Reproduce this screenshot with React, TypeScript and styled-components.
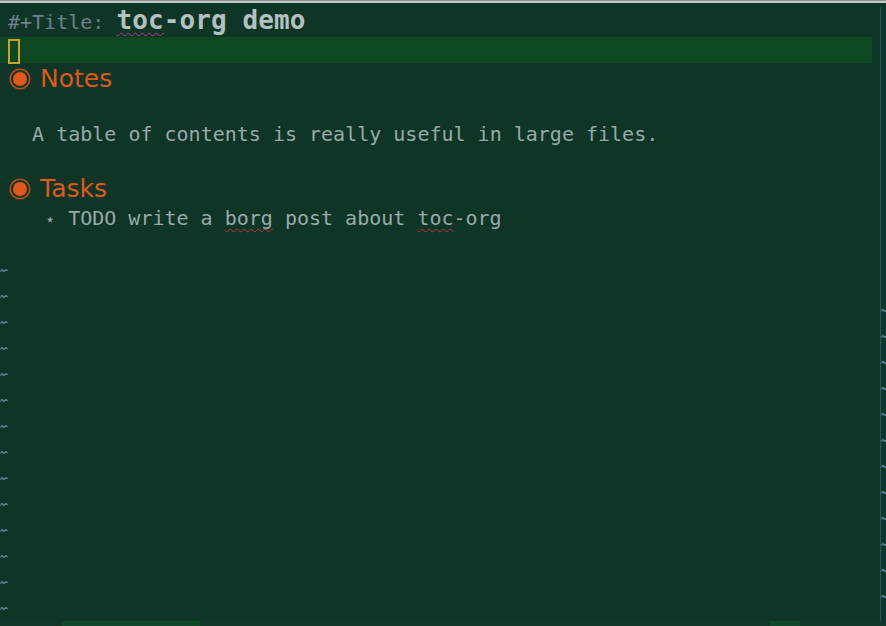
import React from "react";
import styled, { createGlobalStyle } from "styled-components";

const GlobalStyle = createGlobalStyle`
  html, body {
    margin: 0;
    padding: 0;
    background: #0f3526;
    overflow: hidden;
  }
  #root {
    width: 886px;
    height: 626px;
  }
`;

const MONO = `"DejaVu Sans Mono", "Liberation Mono", monospace`;
const SANS = `"DejaVu Sans", "Noto Sans", sans-serif`;

const Screen = styled.div`
  width: 886px;
  height: 626px;
  display: flex;
  flex-direction: column;
  background: #0f3526;
  overflow: hidden;
`;

const TopRule = styled.div`
  height: 3px;
  flex: none;
  background: #c4c6c4;
  border-top: 1px solid #8e9290;
  box-sizing: border-box;
`;

const Body = styled.div`
  flex: 1;
  display: flex;
  min-height: 0;
`;

const Buffer = styled.div`
  width: 872px;
  flex: none;
  display: flex;
  flex-direction: column;
`;

const Line = styled.div<{ $h: number; $hl?: boolean }>`
  height: ${(p) => p.$h}px;
  flex: none;
  display: flex;
  align-items: center;
  background: ${(p) => (p.$hl ? "#0d4820" : "transparent")};
`;

const Fringe = styled.div`
  width: 8px;
  flex: none;
  height: 100%;
  display: flex;
  align-items: center;
  overflow: hidden;
`;

const Content = styled.div<{ $lh: number; $shift?: number }>`
  flex: 1;
  font-family: ${MONO};
  font-size: 20px;
  line-height: ${(p) => p.$lh}px;
  color: #97aaa9;
  white-space: pre;
  padding-top: ${(p) => p.$shift || 0}px;
`;

const Meta = styled.span`
  color: #6c8188;
`;

const TitleText = styled.span`
  font-size: 26px;
  font-weight: bold;
  letter-spacing: 0.1px;
  color: #b4c1c0;
`;

const Spell = styled.span<{ $color?: string }>`
  text-decoration: underline wavy ${(p) => p.$color || "#c8304a"};
  text-decoration-thickness: 1px;
  text-underline-offset: 3px;
  text-decoration-skip-ink: none;
`;

const Cursor = styled.span`
  display: inline-block;
  width: 12px;
  height: 25px;
  box-sizing: border-box;
  border: 2px solid #c9a42a;
  vertical-align: middle;
`;

const Heading = styled.div`
  flex: 1;
  display: flex;
  align-items: center;
`;

const BulletBox = styled.span`
  width: 22px;
  height: 22px;
  flex: none;
  display: flex;
  margin-left: 1px;
`;

const HeadingText = styled.span`
  margin-left: 9px;
  font-family: ${SANS};
  font-size: 25px;
  color: #dc5a1c;
  line-height: 32px;
`;

const Star = styled.span`
  display: inline-block;
  width: 12px;
  text-align: center;
  font-family: ${SANS};
  font-size: 17px;
  line-height: 1;
`;

const RightPane = styled.div`
  flex: 1;
  display: flex;
  padding-left: 8px;
`;

const Divider = styled.div`
  width: 1px;
  flex: none;
  background: #24566e;
  margin-top: 4px;
`;

const RightFringe = styled.div`
  flex: 1;
  overflow: hidden;
  display: flex;
  flex-direction: column;
  padding-top: 294px;
`;

const RightRow = styled.div`
  height: 26px;
  flex: none;
  display: flex;
  align-items: center;
`;

const BottomBar = styled.div`
  height: 5px;
  flex: none;
  display: flex;
  background: #0f3828;
`;

const BarSeg = styled.div<{ $w: number; $c: string }>`
  width: ${(p) => p.$w}px;
  flex: none;
  background: ${(p) => p.$c};
`;

const Tilde: React.FC = () => (
  <svg width="8" height="5" viewBox="0 0 8 5" style={{ flex: "none" }}>
    <path
      d="M0.5 3.5 L2 1.5 L4 3.5 L6 1.5 L7.5 3"
      fill="none"
      stroke="#6a8aa2"
      strokeWidth="1.2"
    />
  </svg>
);

const Bullet: React.FC = () => (
  <svg width="22" height="22" viewBox="0 0 22 22">
    <circle cx="11" cy="11" r="9.8" fill="none" stroke="#b84c1e" strokeWidth="1.6" />
    <circle cx="11" cy="11" r="7" fill="#e2581a" />
  </svg>
);

const TextLine: React.FC<{ h?: number; hl?: boolean; shift?: number; children?: React.ReactNode }> = ({
  h = 26,
  hl,
  shift,
  children,
}) => (
  <Line $h={h} $hl={hl}>
    <Fringe />
    <Content $lh={h - (shift || 0)} $shift={shift}>
      {children}
    </Content>
  </Line>
);

const HeadingLine: React.FC<{ title: string }> = ({ title }) => (
  <Line $h={32}>
    <Fringe />
    <Heading>
      <BulletBox>
        <Bullet />
      </BulletBox>
      <HeadingText>{title}</HeadingText>
    </Heading>
  </Line>
);

const EmptyLine: React.FC = () => (
  <Line $h={26}>
    <Fringe>
      <Tilde />
    </Fringe>
  </Line>
);

export default function App() {
  const leftTildes = Array.from({ length: 14 });
  const rightTildes = Array.from({ length: 12 });
  return (
    <>
      <GlobalStyle />
      <Screen>
        <TopRule />
        <Body>
          <Buffer>
            <TextLine h={34} shift={2}>
              <Meta>#+Title: </Meta>
              <TitleText>
                <Spell $color="#b03a8c">toc</Spell>-org demo
              </TitleText>
            </TextLine>
            <TextLine hl>
              <Cursor />
            </TextLine>
            <HeadingLine title="Notes" />
            <TextLine />
            <TextLine>{"  A table of contents is really useful in large files."}</TextLine>
            <TextLine />
            <HeadingLine title="Tasks" />
            <TextLine>
              {"   "}
              <Star>⋆</Star>
              {" TODO write a "}
              <Spell>borg</Spell>
              {" post about "}
              <Spell>toc</Spell>
              {"-org"}
            </TextLine>
            <TextLine />
            {leftTildes.map((_, i) => (
              <EmptyLine key={i} />
            ))}
          </Buffer>
          <RightPane>
            <Divider />
            <RightFringe>
              {rightTildes.map((_, i) => (
                <RightRow key={i}>
                  <Tilde />
                </RightRow>
              ))}
            </RightFringe>
          </RightPane>
        </Body>
        <BottomBar>
          <BarSeg $w={62} $c="#0f3828" />
          <BarSeg $w={138} $c="#11482a" />
          <BarSeg $w={570} $c="#0f3828" />
          <BarSeg $w={30} $c="#11482a" />
        </BottomBar>
      </Screen>
    </>
  );
}
